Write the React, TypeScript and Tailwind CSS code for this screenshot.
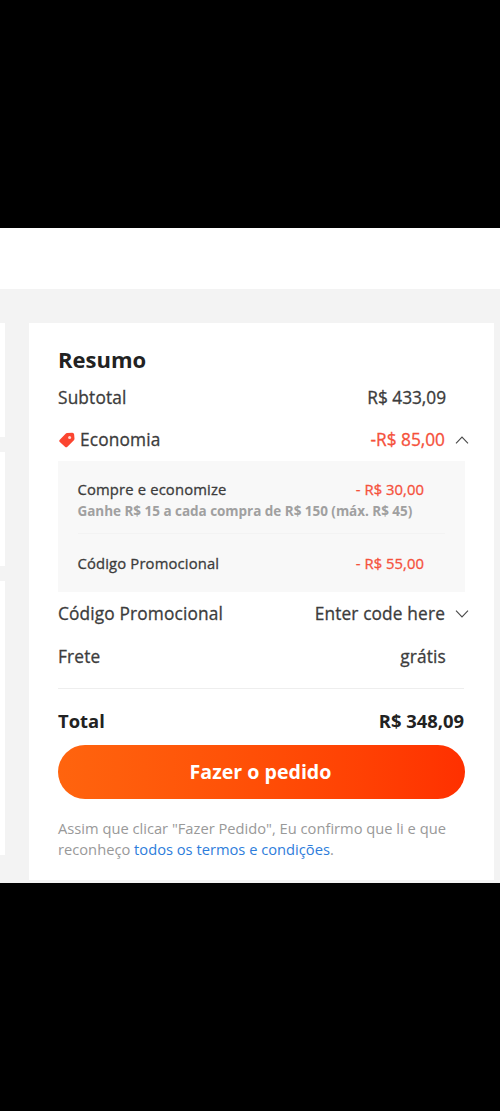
import React, { useState } from 'react';

const savings = [
  { label: 'Compre e economize', value: '- R$ 30,00', note: 'Ganhe R$ 15 a cada compra de R$ 150 (máx. R$ 45)' },
  { label: 'Código Promocional', value: '- R$ 55,00' },
];

function Chevron({ up = false }: { up?: boolean }) {
  return (
    <svg className="ml-[10px] h-[8px] w-[14px] shrink-0" viewBox="0 0 14 8" fill="none" stroke="#4a4a4a" strokeWidth="1.1">
      <path d={up ? 'M1 7.3 L7 1 L13 7.3' : 'M1 0.7 L7 7 L13 0.7'} />
    </svg>
  );
}

function TagIcon() {
  return (
    <svg className="ml-px mr-[5px] h-4 w-4 shrink-0" viewBox="0 0 16 16">
      <path
        d="M8 1.1 L13.2 0.7 Q14.9 0.6 15.1 2.2 L15.5 6.6 Q15.5 7.6 14.9 8.2 L8.4 14.7 Q7.2 15.8 6 14.7 L0.8 10 Q-0.3 8.9 0.8 7.8 L6.6 1.8 Q7.2 1.2 8 1.1 Z"
        fill="#fb4530"
      />
      <circle cx="10.6" cy="5.4" r="1.5" fill="#ffd9d2" />
    </svg>
  );
}

export default function App() {
  const [open, setOpen] = useState(true);

  return (
    <div className="flex h-[1111px] w-[500px] flex-col overflow-hidden bg-black pt-[228px] font-['Open_Sans','Noto_Sans',sans-serif] text-[17.3px] text-[#3c3c3c]">
      <div className="flex h-[655px] flex-col bg-[#f3f3f3]">
        {/* Page header */}
        <header className="mb-[34px] h-[61px] shrink-0 bg-white" />

        <div className="flex gap-6">
          {/* Edge of the checkout column */}
          <div className="flex w-[5px] shrink-0 flex-col gap-[15px]">
            <div className="h-[114px] bg-white" />
            <div className="h-[114px] bg-white" />
            <div className="h-[274px] bg-white" />
          </div>

          {/* Order summary */}
          <section className="h-[557px] w-[465px] shrink-0 bg-white pl-[29px] pt-4 tracking-[0.15px] [-webkit-text-stroke:0.3px]">
            <h2 className="flex h-10 items-center text-[22px] font-bold tracking-normal text-[#222] [-webkit-text-stroke:0px]">Resumo</h2>

            <div className="mb-[3px] mr-12 mt-px flex h-9 items-center justify-between">
              <span>Subtotal</span>
              <span className="tracking-[-0.03px]">R$ 433,09</span>
            </div>

            <button className="flex h-[42px] w-[411px] items-center" onClick={() => setOpen(!open)}>
              <TagIcon />
              <span>Economia</span>
              <span className="ml-auto tracking-[0px] text-[#f5513c]">-R$ 85,00</span>
              <Chevron up={open} />
            </button>

            {open && (
              <div className="h-[131px] w-[407px] bg-[#f8f8f8] pl-[19.5px] pr-5 pt-[17px] text-[14.8px]">
                {savings.map((item) => (
                  <div key={item.label} className="group">
                    <div className="mr-[21px] flex h-[22px] items-center justify-between group-last:h-[59px]">
                      <span>{item.label}</span>
                      <span className="tracking-[0.05px] text-[#f5513c]">{item.value}</span>
                    </div>
                    {item.note && (
                      <p className="flex h-[34px] whitespace-nowrap border-b border-[#f3f3f3] text-[13.5px] font-bold leading-[23px] tracking-[-0.03px] text-[#a0a0a0] [-webkit-text-stroke:0px]">
                        {item.note}
                      </p>
                    )}
                  </div>
                ))}
              </div>
            )}

            <div className="flex h-11 w-[411px] items-center">
              <span>Código Promocional</span>
              <span className="ml-auto">Enter code here</span>
              <Chevron />
            </div>

            <div className="mr-12 flex h-[42px] items-center justify-between">
              <span>Frete</span>
              <span>grátis</span>
            </div>

            <div className="mt-[9.5px] flex h-[57.5px] w-[406px] items-center justify-between border-t border-[#eee] pt-[9px] text-[18.4px] font-bold tracking-normal text-[#222] [-webkit-text-stroke:0px]">
              <span>Total</span>
              <span>R$ 348,09</span>
            </div>

            <button className="flex h-[54px] w-[407px] items-center justify-center rounded-full bg-linear-to-r from-[#ff640e] to-[#ff3000] pr-[2px] text-[19.6px] font-bold tracking-normal text-white [-webkit-text-stroke:0px]">
              Fazer o pedido
            </button>

            <p className="mt-[19px] whitespace-nowrap text-[14.7px] leading-[21px] tracking-normal text-[#999] [-webkit-text-stroke:0px]">
              Assim que clicar "Fazer Pedido", Eu confirmo que li e que
              <br />
              reconheço <a className="text-[#2e7ddb]">todos os termos e condições</a>.
            </p>
          </section>
        </div>
      </div>
    </div>
  );
}
